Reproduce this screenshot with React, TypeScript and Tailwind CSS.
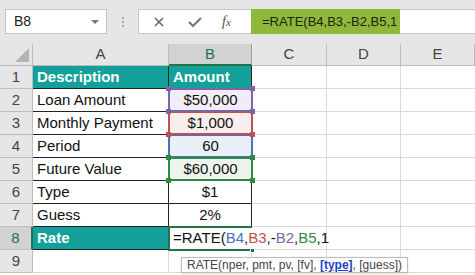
import React from 'react';

const font = { fontFamily: '"Liberation Sans", Arial, sans-serif' };

type Range = { color: string; bg: string; sq: string; z: string };

const ranges: Record<number, Range> = {
  2: { color: 'border-[#8064a2]', bg: 'bg-[#f1edf6]', sq: 'bg-[#8064a2]', z: 'z-[4]' },
  3: { color: 'border-[#c0504d]', bg: 'bg-[#f9eded]', sq: 'bg-[#c0504d]', z: 'z-[3]' },
  4: { color: 'border-[#4472c4]', bg: 'bg-[#ebeff8]', sq: 'bg-[#4472c4]', z: 'z-[1]' },
  5: { color: 'border-[#2e8b3e]', bg: 'bg-[#edf4ee]', sq: 'bg-[#2e8b3e]', z: 'z-[2]' },
};

const rows = [
  { a: 'Description', b: 'Amount', head: true },
  { a: 'Loan Amount', b: '$50,000' },
  { a: 'Monthly Payment', b: '$1,000' },
  { a: 'Period', b: '60' },
  { a: 'Future Value', b: '$60,000' },
  { a: 'Type', b: '$1' },
  { a: 'Guess', b: '2%' },
  { a: 'Rate', b: '', head: true },
];

const Corner: React.FC<{ cls: string; pos: string }> = ({ cls, pos }) => (
  <span className={`absolute w-[5px] h-[5px] ${cls} ${pos}`} />
);

const TopBar = () => (
  <div className="h-[44px] bg-[#e6e6e6] flex items-start pt-[9px] pl-[5px]">
    <div className="w-[102px] h-[25px] bg-white border border-[#c6c6c6] flex items-center justify-between pl-[8px] pr-[7px] text-[14px] text-[#222]">
      <span>B8</span>
      <span className="w-0 h-0 border-l-[4px] border-r-[4px] border-t-[4px] border-l-transparent border-r-transparent border-t-[#777]" />
    </div>
    <div className="w-[31px] h-[25px] flex flex-col items-center justify-center gap-[2px]">
      <span className="w-[2px] h-[2px] bg-[#aaa]" />
      <span className="w-[2px] h-[2px] bg-[#aaa]" />
      <span className="w-[2px] h-[2px] bg-[#aaa]" />
    </div>
    <div className="flex-1 h-[25px] bg-white border border-[#c6c6c6] border-r-0 flex items-center">
      <div className="w-[112px] flex items-center text-[#555]">
        <svg width="14" height="14" viewBox="0 0 14 14" className="ml-[13px]">
          <path d="M3 3 L11 11 M11 3 L3 11" stroke="#666" strokeWidth="1.6" />
        </svg>
        <svg width="16" height="14" viewBox="0 0 16 14" className="ml-[21px]">
          <path d="M2 7 L6 11 L14 3" stroke="#777" strokeWidth="2.2" fill="none" />
        </svg>
        <span className="ml-[19px] text-[14px] italic text-[#555]" style={{ fontFamily: '"Liberation Serif", serif' }}>
          f<span className="text-[11px]">x</span>
        </span>
      </div>
      <div className="w-[149px] h-[25px] bg-[#8fb83b] flex items-center pl-[11px] text-[13px] text-[#1c2410] whitespace-nowrap">
        =RATE(B4,B3,-B2,B5,1
      </div>
    </div>
  </div>
);

const colHeads = ['A', 'B', 'C', 'D', 'E'];

export default function App() {
  return (
    <div className="w-[475px] h-[275px] bg-white overflow-hidden relative" style={font}>
      <TopBar />
      <div className="grid grid-cols-[33px_136px_83px_75px_74px_1fr] grid-rows-[22px_repeat(9,23px)] text-[15px]">
        {/* header row */}
        <div className="bg-[#e6e6e6] border-r border-b border-[#bdbdbd] relative">
          <svg width="14" height="14" viewBox="0 0 14 14" className="absolute right-[3px] bottom-[3px]">
            <path d="M14 0 L14 14 L0 14 Z" fill="#b4b4b4" />
          </svg>
        </div>
        {colHeads.map((c) => (
          <div
            key={c}
            className={`flex items-center justify-center border-r border-b ${
              c === 'B'
                ? 'bg-[#d2d2d2] text-[#217346] border-[#9b9b9b] border-b-[#217346] border-b-2'
                : 'bg-[#e6e6e6] text-[#444] border-[#bdbdbd]'
            }`}
          >
            {c}
          </div>
        ))}

        {Array.from({ length: 9 }).map((_, i) => {
          const n = i + 1;
          const r = rows[i];
          const sel = n === 8;
          const range = ranges[n];
          return (
            <React.Fragment key={n}>
              <div
                className={`flex items-center justify-center border-r border-b ${
                  sel ? 'bg-[#d2d2d2] text-[#217346] border-r-[#217346] border-r-2 border-b-[#bdbdbd]' : 'bg-[#e6e6e6] text-[#444] border-[#bdbdbd]'
                }`}
              >
                {n}
              </div>
              {/* column A */}
              {r ? (
                <div
                  className={`flex items-center pl-[4px] border-r border-b border-[#222] whitespace-nowrap ${
                    r.head ? 'bg-[#14a09a] text-white font-bold' : 'bg-white text-[#111]'
                  }`}
                >
                  {r.a}
                </div>
              ) : (
                <div className="border-r border-b border-[#dadada]" />
              )}
              {/* column B */}
              {n === 1 ? (
                <div className="flex items-center pl-[4px] bg-[#14a09a] text-white font-bold border-r border-b border-[#222]">
                  {r.b}
                </div>
              ) : range ? (
                <div className={`relative flex items-center justify-center ${range.bg} text-[#111] border-b border-[#222]`}>
                  {r.b}
                  <span className={`absolute inset-x-[-1px] top-[-1px] bottom-[-1px] border-2 ${range.color} ${range.z}`} />
                  <Corner cls={`${range.sq} ${range.z}`} pos="left-[-3px] top-[-3px]" />
                  <Corner cls={`${range.sq} ${range.z}`} pos="right-[-3px] top-[-3px]" />
                  <Corner cls={`${range.sq} ${range.z}`} pos="left-[-3px] bottom-[-3px]" />
                  <Corner cls={`${range.sq} ${range.z}`} pos="right-[-3px] bottom-[-3px]" />
                </div>
              ) : n === 8 ? (
                <div className="relative z-10 flex items-center pl-[4px] text-[#111] whitespace-nowrap">
                  <span className="absolute left-[-1px] right-0 top-[-1px] bottom-[-1px] border-2 border-r-0 border-[#217346]" />
                  <span className="absolute right-[-3px] bottom-[-3px] w-[5px] h-[5px] bg-[#217346] border border-white" />
                  <span className="relative">
                    =RATE(<span className="text-[#4472c4]">B4</span>,<span className="text-[#c0504d]">B3</span>,-<span className="text-[#8064a2]">B2</span>,<span className="text-[#2e8b3e]">B5</span>,1
                  </span>
                </div>
              ) : r ? (
                <div className="flex items-center justify-center bg-white text-[#111] border-r border-b border-[#222]">
                  {r.b}
                </div>
              ) : (
                <div className="border-r border-b border-[#dadada]" />
              )}
              <div className="border-r border-b border-[#dadada]" />
              <div className="border-r border-b border-[#dadada]" />
              <div className="border-b border-[#dadada]" />
            </React.Fragment>
          );
        })}
      </div>

      {/* function tooltip */}
      <div className="absolute left-[181px] top-[257px] h-[16px] px-[5px] flex items-center bg-white border border-[#bcbcbc] text-[12px] text-[#444] whitespace-nowrap shadow-sm z-20">
        RATE(nper, pmt, pv, [fv],&nbsp;<span className="font-bold text-[#1f3fcf] underline">[type]</span>, [guess])
      </div>
    </div>
  );
}
